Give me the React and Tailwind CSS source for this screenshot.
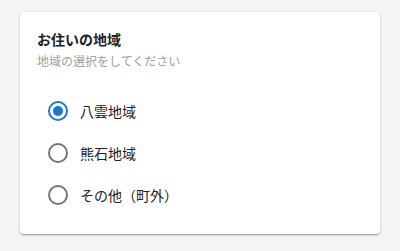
import { useState } from 'react';

const options = [
  { value: 'yakumo', label: '八雲地域' },
  { value: 'kumaishi', label: '熊石地域' },
  { value: 'other', label: 'その他（町外）' },
];

function Radio({ checked }) {
  return (
    <span
      className={`flex h-[20px] w-[20px] items-center justify-center rounded-full border-2 ${
        checked ? 'border-[#1976d2]' : 'border-[#757575]'
      }`}
    >
      {checked && <span className="h-[10px] w-[10px] rounded-full bg-[#1976d2]" />}
    </span>
  );
}

export default function App() {
  const [area, setArea] = useState('yakumo');

  return (
    <div
      className="min-h-[251px] w-full bg-[#f3f4f6] px-[20px] pt-[12px]"
      style={{ fontFamily: '"Noto Sans CJK JP", "Noto Sans", sans-serif' }}
    >
      <div className="h-[222px] rounded-[4px] bg-white px-[17px] pt-[17px] shadow-[0_1px_3px_rgba(0,0,0,0.2),0_1px_1px_rgba(0,0,0,0.14),0_2px_1px_-1px_rgba(0,0,0,0.12)]">
        <h2 className="text-[14px] font-bold leading-[20px] text-[#212121]">お住いの地域</h2>
        <p className="mt-[3px] text-[12px] leading-[18px] text-[#9e9e9e]">地域の選択をしてください</p>
        <div className="mt-[20px] flex flex-col">
          {options.map((o) => (
            <button
              key={o.value}
              onClick={() => setArea(o.value)}
              className="flex h-[42px] items-center gap-[12px] pl-[11px] text-left"
            >
              <Radio checked={area === o.value} />
              <span className="text-[14px] leading-[20px] text-[#212121]">{o.label}</span>
            </button>
          ))}
        </div>
      </div>
    </div>
  );
}
